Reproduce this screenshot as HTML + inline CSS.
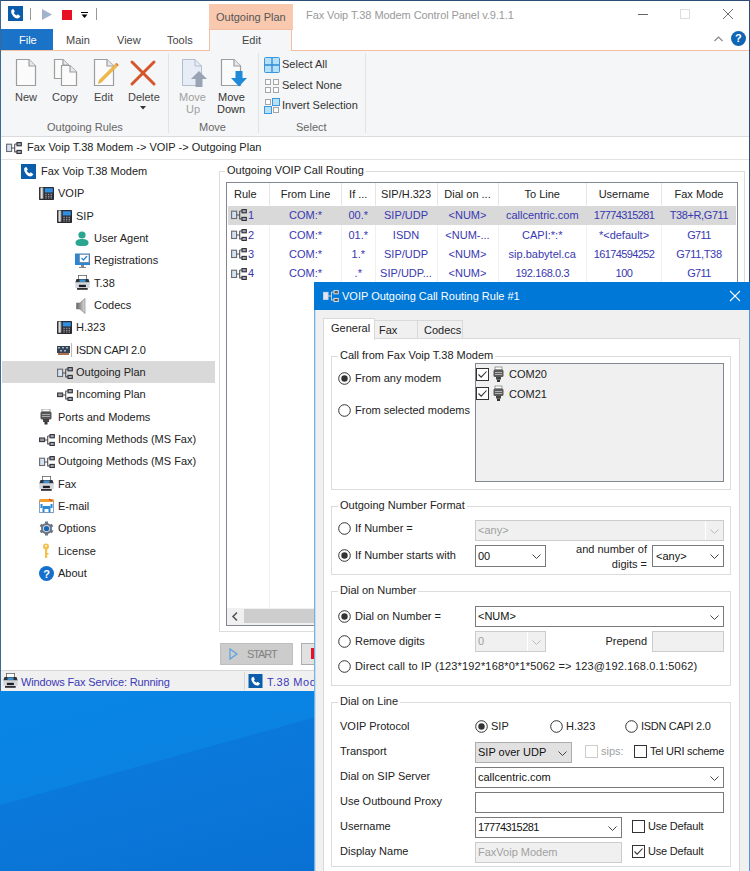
<!DOCTYPE html>
<html><head><meta charset="utf-8">
<style>
*{box-sizing:border-box;margin:0;padding:0}
html,body{width:750px;height:871px;overflow:hidden;background:#fff}
body{position:relative;font-family:"Liberation Sans",sans-serif;font-size:11px;color:#000}
.a{position:absolute}
.t{position:absolute;white-space:nowrap;line-height:13px}
svg{position:absolute;overflow:visible}
</style></head><body>

<svg width="0" height="0" style="position:absolute">
<defs>
<symbol id="phone" viewBox="0 0 15 15"><rect width="15" height="15" fill="#0b5cab"/><path d="M3.2 4.3 L5.1 2.7 L6.9 5.5 L5.7 6.7 Q6.5 8.5 8.5 9.5 L9.7 8.3 L12.4 10.2 L11 12.1 Q8 13.2 5.2 10.2 Q2.4 7.2 3.2 4.3 Z" fill="#fff"/></symbol>
<symbol id="desk" viewBox="0 0 15 13"><defs><linearGradient id="hg" x1="0" x2="1"><stop offset="0" stop-color="#555"/><stop offset="0.5" stop-color="#eee"/><stop offset="1" stop-color="#777"/></linearGradient></defs><rect x="0" y="0" width="15" height="13" rx="0.8" fill="#2a2a30"/><rect x="0.8" y="0.6" width="3.8" height="11.2" rx="0.8" fill="url(#hg)"/><rect x="5.8" y="1.2" width="8" height="4.3" fill="#2f90e2"/><g fill="#9a9aa2"><rect x="6.3" y="6.7" width="1.5" height="1.2"/><rect x="8.9" y="6.7" width="1.5" height="1.2"/><rect x="11.5" y="6.7" width="1.5" height="1.2"/><rect x="6.3" y="8.7" width="1.5" height="1.2"/><rect x="8.9" y="8.7" width="1.5" height="1.2"/><rect x="11.5" y="8.7" width="1.5" height="1.2"/><rect x="6.3" y="10.5" width="1.5" height="1"/><rect x="8.9" y="10.5" width="1.5" height="1"/><rect x="11.5" y="10.5" width="1.5" height="1"/></g></symbol>
<symbol id="route" viewBox="0 0 16 12"><rect x="0.6" y="2.2" width="5" height="7.3" fill="#d4e2f2" stroke="#6a6a70" stroke-width="1.1"/><path d="M5.6 6 H8.7 M8.7 1.9 V10.6 M8.7 2 H11 M8.7 9.9 H11" stroke="#505058" stroke-width="1.1" fill="none"/><rect x="11" y="0.6" width="4.3" height="3.2" fill="#a4aabb" stroke="#2e2e33" stroke-width="1.1"/><rect x="11" y="8.4" width="4.3" height="3.1" fill="#a4aabb" stroke="#2e2e33" stroke-width="1.1"/></symbol>
<symbol id="routein" viewBox="0 0 16 12"><rect x="0.6" y="4" width="5" height="3.6" fill="#9a9aa2" stroke="#38383e" stroke-width="1.1"/><path d="M5.6 6 H8.7 M8.7 1.9 V10.6 M8.7 2 H11 M8.7 9.9 H11" stroke="#505058" stroke-width="1.1" fill="none"/><rect x="11" y="0.6" width="4.3" height="3.2" fill="#a4aabb" stroke="#2e2e33" stroke-width="1.1"/><rect x="11" y="8.4" width="4.3" height="3.1" fill="#a4aabb" stroke="#2e2e33" stroke-width="1.1"/></symbol>
<symbol id="printer" viewBox="0 0 15 16"><rect x="3.4" y="0.4" width="8.2" height="4.2" fill="#fff" stroke="#666" stroke-width="0.8"/><path d="M1.5 4 H13.5 L14.7 7.6 H0.3 Z" fill="#2f3338"/><rect x="4.5" y="4.4" width="6" height="2.6" fill="#3f8fd0"/><rect x="0.3" y="7.5" width="14.4" height="5.4" fill="#d3d7de"/><rect x="3.9" y="9.8" width="7" height="2.3" fill="#1e1e22"/><rect x="2" y="13" width="10.7" height="1.8" fill="#2e2e33"/></symbol>
<symbol id="port" viewBox="0 0 12 16"><rect x="2" y="0" width="8" height="3" fill="#fff" stroke="#888" stroke-width="0.8"/><rect x="0.5" y="2.5" width="11" height="8" rx="1.5" fill="#555"/><rect x="2" y="5" width="8" height="1" fill="#aaa"/><rect x="2" y="7" width="8" height="1" fill="#aaa"/><rect x="3" y="10" width="6" height="3" fill="#444"/><rect x="4.5" y="13" width="3" height="2.5" fill="#333"/></symbol>
</defs></svg>

<!-- ===== MAIN WINDOW ===== -->
<div class="a" style="left:0;top:0;width:750px;height:691px;background:#fff;border-top:1px solid #2b4f77;border-left:1px solid #3c6894"></div>

<!-- title bar -->
<div class="a" style="left:209px;top:4px;width:84px;height:26px;background:#f9c9af"></div>
<div class="t" style="left:216px;top:11px;color:#555">Outgoing Plan</div>
<div class="t" style="left:306px;top:8.5px;color:#999;letter-spacing:-0.08px">Fax Voip T.38 Modem Control Panel v.9.1.1</div>

<!-- QAT -->
<svg style="left:8px;top:6px" width="15" height="15"><use href="#phone"/></svg>
<div class="a" style="left:30px;top:8px;width:1px;height:12px;background:#999"></div>
<svg style="left:42px;top:9px" width="11" height="12"><path d="M0 0 L10 5.5 L0 11 Z" fill="#a4b3cc"/></svg>
<div class="a" style="left:62px;top:10px;width:10px;height:10px;background:#e81123"></div>
<svg style="left:81px;top:12px" width="7" height="7"><rect x="0" y="0" width="7" height="1" fill="#000"/><path d="M0.5 2.5 L6.5 2.5 L3.5 6 Z" fill="#000"/></svg>
<div class="a" style="left:96px;top:8px;width:1px;height:12px;background:#999"></div>

<!-- window buttons -->
<div class="a" style="left:638px;top:14px;width:10px;height:1px;background:#666"></div>
<div class="a" style="left:680px;top:9px;width:10px;height:10px;border:1px solid #ddd"></div>
<svg style="left:723px;top:9px" width="10" height="10"><path d="M0 0 L10 10 M10 0 L0 10" stroke="#707070" stroke-width="1"/></svg>

<!-- tabs row -->
<div class="a" style="left:1px;top:29px;width:52px;height:21px;background:#1a73c6"></div>
<div class="t" style="left:19px;top:34px;color:#fff">File</div>
<div class="t" style="left:66px;top:34px;color:#444">Main</div>
<div class="t" style="left:117px;top:34px;color:#444">View</div>
<div class="t" style="left:167px;top:34px;color:#444">Tools</div>
<div class="a" style="left:209px;top:29px;width:83px;height:23px;background:#f5f6f7;border:1px solid #f3bfa2;border-bottom:none"></div>
<div class="t" style="left:242px;top:34px;color:#444">Edit</div>
<svg style="left:714px;top:36px" width="9" height="6"><path d="M0.5 5 L4.5 1 L8.5 5" stroke="#888" stroke-width="1.2" fill="none"/></svg>
<div class="a" style="left:731px;top:31px;width:15px;height:15px;border-radius:50%;background:#1065b5"></div>
<div class="t" style="left:735px;top:32px;color:#fff;font-weight:bold;font-size:11px">?</div>

<!-- ribbon body -->
<div class="a" style="left:1px;top:50px;width:749px;height:1px;background:#f3bfa2"></div>
<div class="a" style="left:210px;top:50px;width:81px;height:1px;background:#f5f6f7"></div>
<div class="a" style="left:1px;top:51px;width:749px;height:85px;background:#f5f6f7"></div>
<div class="a" style="left:1px;top:136px;width:749px;height:1px;background:#dadbdc"></div>


<!-- ribbon buttons -->
<svg style="left:16px;top:59px" width="20" height="27"><path d="M0.5 0.5 H13 L19.5 7 V26.5 H0.5 Z" fill="#fbfbfb" stroke="#9d9d9d" stroke-width="1.2"/><path d="M13 0.5 V7 H19.5" fill="#e8e8e8" stroke="#9d9d9d" stroke-width="1.2"/></svg>
<div class="t" style="left:15px;top:91px;color:#444">New</div>
<svg style="left:54px;top:59px" width="23" height="27"><path d="M0.5 0.5 H9 L14.5 6 V19.5 H0.5 Z" fill="#fbfbfb" stroke="#9d9d9d" stroke-width="1.2"/><path d="M9 0.5 V6 H14.5" fill="#e8e8e8" stroke="#9d9d9d" stroke-width="1.2"/><path d="M7.5 6.5 H16 L22.5 13 V26.5 H7.5 Z" fill="#fbfbfb" stroke="#9d9d9d" stroke-width="1.2"/><path d="M16 6.5 V13 H22.5" fill="#e8e8e8" stroke="#9d9d9d" stroke-width="1.2"/></svg>
<div class="t" style="left:52px;top:91px;color:#444">Copy</div>
<svg style="left:94px;top:59px" width="26" height="27"><path d="M0.5 0.5 H13 L19.5 7 V26.5 H0.5 Z" fill="#fbfbfb" stroke="#9d9d9d" stroke-width="1.2"/><path d="M13 0.5 V7 H19.5" fill="#e8e8e8" stroke="#9d9d9d" stroke-width="1.2"/><path d="M22.5 4 L24.5 6 L7.5 23 L4.5 24.5 L5.5 21 Z" fill="#efb845" stroke="#e0a030" stroke-width="0.6"/><path d="M22.5 4 L24.5 6 L23.5 7 L21.5 5 Z" fill="#e0785a"/></svg>
<div class="t" style="left:94px;top:91px;color:#444">Edit</div>
<svg style="left:130px;top:60px" width="26" height="26"><path d="M2 2 L24 24 M24 2 L2 24" stroke="#d6552a" stroke-width="3" stroke-linecap="round"/></svg>
<div class="t" style="left:128px;top:91px;color:#444">Delete</div>
<svg style="left:140px;top:106px" width="6" height="4"><path d="M0 0 H6 L3 3.5 Z" fill="#333"/></svg>
<div class="a" style="left:168px;top:53px;width:1px;height:80px;background:#e2e3e4"></div>
<div class="t" style="left:47px;top:121px;color:#666">Outgoing Rules</div>

<svg style="left:182px;top:59px" width="26" height="29"><path d="M0.5 0.5 H13 L19.5 7 V26.5 H0.5 Z" fill="#e6edf6" stroke="#b3bccb"/><path d="M13 0.5 V7 H19.5" fill="none" stroke="#b3bccb"/><path d="M17 12 L25 20 H20.5 V28 H13.5 V20 H9 Z" fill="#9aa3b4"/></svg>
<div class="t" style="left:179px;top:91px;color:#a0a0a0">Move</div>
<div class="t" style="left:186px;top:103px;color:#a0a0a0">Up</div>
<svg style="left:221px;top:59px" width="27" height="29"><path d="M0.5 0.5 H13 L19.5 7 V26.5 H0.5 Z" fill="#fbfbfb" stroke="#9d9d9d" stroke-width="1.2"/><path d="M13 0.5 V7 H19.5" fill="#e8e8e8" stroke="#9d9d9d" stroke-width="1.2"/><path d="M14.5 12 H21.5 V19 H26 L18 27.5 L10 19 H14.5 Z" fill="#1e8ad8"/></svg>
<div class="t" style="left:218px;top:91px;color:#333">Move</div>
<div class="t" style="left:217px;top:103px;color:#333">Down</div>
<div class="t" style="left:199px;top:121px;color:#666">Move</div>
<div class="a" style="left:258px;top:53px;width:1px;height:80px;background:#e2e3e4"></div>

<svg style="left:264px;top:57px" width="16" height="16"><rect x="0.5" y="0.5" width="15" height="15" rx="1" fill="#b5e0f7" stroke="#3d97dc"/><path d="M8 1 V15 M1 8 H15" stroke="#2f8ad6" stroke-width="1.3"/></svg>
<div class="t" style="left:282px;top:58px;color:#333">Select All</div>
<svg style="left:265px;top:79px" width="14" height="14"><g fill="#fbfbfb" stroke="#a6a6a6"><rect x="0.5" y="0.5" width="5" height="5"/><rect x="8.5" y="0.5" width="5" height="5"/><rect x="0.5" y="8.5" width="5" height="5"/><rect x="8.5" y="8.5" width="5" height="5"/></g></svg>
<div class="t" style="left:282px;top:79px;color:#333">Select None</div>
<svg style="left:264px;top:98px" width="16" height="16"><g fill="#fbfbfb" stroke="#a6a6a6"><rect x="1.5" y="1.5" width="5" height="5"/><rect x="9.5" y="9.5" width="5" height="5"/></g><g fill="#b5e0f7" stroke="#3d97dc"><rect x="8.5" y="0.5" width="7" height="7"/><rect x="0.5" y="8.5" width="7" height="7"/></g></svg>
<div class="t" style="left:282px;top:99px;color:#333">Invert Selection</div>
<div class="t" style="left:296px;top:121px;color:#666">Select</div>
<div class="a" style="left:365px;top:53px;width:1px;height:80px;background:#e2e3e4"></div>

<!-- breadcrumb -->
<div class="a" style="left:1px;top:159px;width:749px;height:1px;background:#e3e3e3"></div>
<svg style="left:6px;top:142px" width="16" height="12"><use href="#route"/></svg>
<div class="t" style="left:27px;top:141px;color:#222">Fax Voip T.38 Modem -&gt; VOIP -&gt; Outgoing Plan</div>

<!-- tree highlight -->
<div class="a" style="left:2px;top:361px;width:213px;height:22px;background:#d9d9d9"></div>

<!-- tree -->
<div class="t" style="left:41px;top:165.0px;color:#222">Fax Voip T.38 Modem</div>
<svg style="left:21px;top:164.0px" width="15" height="15"><use href="#phone"/></svg>
<div class="t" style="left:58px;top:187.3px;color:#222">VOIP</div>
<svg style="left:39px;top:187.3px" width="15" height="13"><use href="#desk"/></svg>
<div class="t" style="left:76px;top:209.7px;color:#222">SIP</div>
<svg style="left:57px;top:209.7px" width="15" height="13"><use href="#desk"/></svg>
<div class="t" style="left:94px;top:232.0px;color:#222">User Agent</div>
<svg style="left:75px;top:230.5px" width="15" height="16"><circle cx="7" cy="4" r="3.6" fill="#2aa58f"/><path d="M0.5 12 C0.5 9 3 8 7 8 C11 8 13.5 9 13.5 12 C13.5 14.6 11 15 7 15 C3 15 0.5 14.6 0.5 12 Z" fill="#2aa58f"/></svg>
<div class="t" style="left:94px;top:254.3px;color:#222">Registrations</div>
<svg style="left:75px;top:252.8px" width="15" height="16"><rect x="0" y="0.5" width="15" height="11.5" fill="#2b86d6"/><rect x="4.5" y="1.3" width="9.5" height="8" fill="#fff" stroke="#777" stroke-width="0.6"/><path d="M6.5 5 L8.5 7 L12 3" stroke="#2b86d6" stroke-width="1.3" fill="none"/><rect x="6" y="12" width="3" height="2" fill="#888"/><rect x="4" y="14" width="7" height="1" fill="#888"/></svg>
<div class="t" style="left:94px;top:276.6px;color:#222">T.38</div>
<svg style="left:75px;top:275.1px" width="15" height="16"><use href="#printer"/></svg>
<div class="t" style="left:94px;top:299.0px;color:#222">Codecs</div>
<svg style="left:76px;top:297.5px" width="10" height="16"><defs><linearGradient id="sg" x1="0" x2="1"><stop offset="0" stop-color="#666"/><stop offset="1" stop-color="#ddd"/></linearGradient></defs><path d="M0.5 5 H4 L9 0.5 V15.5 L4 11 H0.5 Z" fill="url(#sg)" stroke="#777" stroke-width="0.6"/></svg>
<div class="t" style="left:76px;top:321.3px;color:#222">H.323</div>
<svg style="left:57px;top:321.3px" width="15" height="13"><use href="#desk"/></svg>
<div class="t" style="left:76px;top:343.6px;color:#222"><span style="letter-spacing:-0.3px">ISDN CAPI 2.0</span></div>
<svg style="left:57px;top:343.1px" width="16" height="14"><rect x="0" y="3" width="13" height="7" fill="#3a4250"/><g fill="#8fb7d8"><rect x="1" y="4" width="2" height="1.5"/><rect x="5" y="4" width="2" height="1.5"/><rect x="9" y="4" width="2" height="1.5"/><rect x="3" y="7" width="2" height="1.5"/><rect x="7" y="7" width="2" height="1.5"/></g><rect x="1" y="10" width="11" height="2" fill="#b0704a"/><path d="M14.5 0 V14" stroke="#bbb" stroke-width="1"/></svg>
<div class="t" style="left:76px;top:366.0px;color:#222">Outgoing Plan</div>
<svg style="left:56.5px;top:367.0px" width="16" height="12"><use href="#route"/></svg>
<div class="t" style="left:76px;top:388.3px;color:#222">Incoming Plan</div>
<svg style="left:56.5px;top:389.3px" width="16" height="12"><use href="#routein"/></svg>
<div class="t" style="left:58px;top:410.6px;color:#222">Ports and Modems</div>
<svg style="left:40px;top:409.1px" width="12" height="16"><use href="#port"/></svg>
<div class="t" style="left:58px;top:433.0px;color:#222">Incoming Methods (MS Fax)</div>
<svg style="left:38.5px;top:434.0px" width="16" height="12"><use href="#routein"/></svg>
<div class="t" style="left:58px;top:455.3px;color:#222">Outgoing Methods (MS Fax)</div>
<svg style="left:38.5px;top:456.3px" width="16" height="12"><use href="#route"/></svg>
<div class="t" style="left:58px;top:477.6px;color:#222">Fax</div>
<svg style="left:39px;top:476.1px" width="15" height="16"><use href="#printer"/></svg>
<div class="t" style="left:58px;top:499.9px;color:#222">E-mail</div>
<svg style="left:39px;top:498.4px" width="15" height="16"><rect x="0.5" y="2.5" width="14" height="12" fill="#fff" stroke="#8aa0b8"/><rect x="0.5" y="1" width="14" height="3" fill="#f0a030"/><path d="M10 1 L13 3" stroke="#e04020" stroke-width="1.2"/><path d="M3.5 8 H11.5 V14.5 H9.5 V11 H5.5 V14.5 H3.5 Z" fill="#2a8ad6"/><rect x="1.5" y="6" width="2" height="4" fill="#2a8ad6"/><rect x="11.5" y="6" width="2" height="4" fill="#2a8ad6"/></svg>
<div class="t" style="left:58px;top:522.3px;color:#222">Options</div>
<svg style="left:39px;top:521.3px" width="15" height="15"><circle cx="7.5" cy="7.5" r="5.5" fill="#6b7584"/><g stroke="#6b7584" stroke-width="3"><path d="M7.5 0.5 V14.5"/><path d="M1.4 4 L13.6 11"/><path d="M1.4 11 L13.6 4"/></g><circle cx="7.5" cy="7.5" r="3.6" fill="#cfd6e0"/><circle cx="7.5" cy="7.5" r="2.6" fill="#1565b8"/></svg>
<div class="t" style="left:58px;top:544.6px;color:#222">License</div>
<svg style="left:42px;top:543.1px" width="8" height="16"><circle cx="4" cy="3.6" r="3" fill="#f5c04a"/><rect x="3" y="5" width="2.2" height="10" fill="#f5c04a"/><rect x="5" y="10" width="1.5" height="1.5" fill="#f5c04a"/><circle cx="4" cy="3" r="0.9" fill="#fff"/></svg>
<div class="t" style="left:58px;top:566.9px;color:#222">About</div>
<svg style="left:39px;top:565.9px" width="15" height="15"><circle cx="7.5" cy="7.5" r="7.5" fill="#1470cc"/><text x="7.5" y="11.5" text-anchor="middle" font-family="Liberation Sans" font-weight="bold" font-size="11" fill="#fff">?</text></svg>

<!-- list group -->
<div class="a" style="left:219px;top:171px;width:526px;height:461px;border:1px solid #dcdcdc;border-radius:0"></div>

<div class="t" style="left:225px;top:164px;color:#222;background:#fff;padding:0 2px">Outgoing VOIP Call Routing</div>
<div class="a" style="left:226px;top:182px;width:512px;height:444px;border:1px solid #828790;background:#fff"></div>
<div class="a" style="left:269px;top:183px;width:1px;height:22px;background:#e5e5e5"></div>
<div class="a" style="left:269px;top:205px;width:1px;height:403px;background:#f0f0f0"></div>
<div class="a" style="left:341px;top:183px;width:1px;height:22px;background:#e5e5e5"></div>
<div class="a" style="left:341px;top:205px;width:1px;height:403px;background:#f0f0f0"></div>
<div class="a" style="left:375px;top:183px;width:1px;height:22px;background:#e5e5e5"></div>
<div class="a" style="left:375px;top:205px;width:1px;height:403px;background:#f0f0f0"></div>
<div class="a" style="left:437px;top:183px;width:1px;height:22px;background:#e5e5e5"></div>
<div class="a" style="left:437px;top:205px;width:1px;height:403px;background:#f0f0f0"></div>
<div class="a" style="left:498px;top:183px;width:1px;height:22px;background:#e5e5e5"></div>
<div class="a" style="left:498px;top:205px;width:1px;height:403px;background:#f0f0f0"></div>
<div class="a" style="left:586px;top:183px;width:1px;height:22px;background:#e5e5e5"></div>
<div class="a" style="left:586px;top:205px;width:1px;height:403px;background:#f0f0f0"></div>
<div class="a" style="left:661px;top:183px;width:1px;height:22px;background:#e5e5e5"></div>
<div class="a" style="left:661px;top:205px;width:1px;height:403px;background:#f0f0f0"></div>
<div class="t" style="left:234px;top:188px;color:#222">Rule</div>
<div class="t" style="left:269.5px;top:188px;width:72.0px;text-align:center;color:#222">From Line</div>
<div class="t" style="left:341.5px;top:188px;width:33.5px;text-align:center;color:#222">If ...</div>
<div class="t" style="left:375.0px;top:188px;width:62.0px;text-align:center;color:#222">SIP/H.323</div>
<div class="t" style="left:437.0px;top:188px;width:61.0px;text-align:center;color:#222">Dial on ...</div>
<div class="t" style="left:498.0px;top:188px;width:88.5px;text-align:center;color:#222">To Line</div>
<div class="t" style="left:586.5px;top:188px;width:75.0px;text-align:center;color:#222">Username</div>
<div class="t" style="left:661.5px;top:188px;width:75.0px;text-align:center;color:#222">Fax Mode</div>
<div class="a" style="left:228px;top:206px;width:508px;height:19px;background:#d9d9d9"></div>
<svg style="left:231px;top:209.0px" width="16" height="12"><use href="#route"/></svg>
<div class="t" style="left:248px;top:209.4px;color:#3838b0">1</div>
<div class="t" style="left:269.5px;top:209.4px;width:72.0px;text-align:center;color:#3838b0">COM:*</div>
<div class="t" style="left:341.5px;top:209.4px;width:33.5px;text-align:center;color:#3838b0">00.*</div>
<div class="t" style="left:375.0px;top:209.4px;width:62.0px;text-align:center;color:#3838b0">SIP/UDP</div>
<div class="t" style="left:437.0px;top:209.4px;width:61.0px;text-align:center;color:#3838b0">&lt;NUM&gt;</div>
<div class="t" style="left:498.0px;top:209.4px;width:88.5px;text-align:center;color:#3838b0">callcentric.com</div>
<div class="t" style="left:586.5px;top:209.4px;width:75.0px;text-align:center;color:#3838b0"><span style="letter-spacing:-0.6px">17774315281</span></div>
<div class="t" style="left:661.5px;top:209.4px;width:75.0px;text-align:center;color:#3838b0"><span style="letter-spacing:-0.4px">T38+R,G711</span></div>
<svg style="left:231px;top:228.7px" width="16" height="12"><use href="#route"/></svg>
<div class="t" style="left:248px;top:228.6px;color:#3838b0">2</div>
<div class="t" style="left:269.5px;top:228.6px;width:72.0px;text-align:center;color:#3838b0">COM:*</div>
<div class="t" style="left:341.5px;top:228.6px;width:33.5px;text-align:center;color:#3838b0">01.*</div>
<div class="t" style="left:375.0px;top:228.6px;width:62.0px;text-align:center;color:#3838b0">ISDN</div>
<div class="t" style="left:437.0px;top:228.6px;width:61.0px;text-align:center;color:#3838b0">&lt;NUM-...</div>
<div class="t" style="left:498.0px;top:228.6px;width:88.5px;text-align:center;color:#3838b0">CAPI:*:*</div>
<div class="t" style="left:586.5px;top:228.6px;width:75.0px;text-align:center;color:#3838b0">*&lt;default&gt;</div>
<div class="t" style="left:661.5px;top:228.6px;width:75.0px;text-align:center;color:#3838b0"><span style="letter-spacing:-0.6px">G711</span></div>
<svg style="left:231px;top:248.3px" width="16" height="12"><use href="#route"/></svg>
<div class="t" style="left:248px;top:247.8px;color:#3838b0">3</div>
<div class="t" style="left:269.5px;top:247.8px;width:72.0px;text-align:center;color:#3838b0">COM:*</div>
<div class="t" style="left:341.5px;top:247.8px;width:33.5px;text-align:center;color:#3838b0">1.*</div>
<div class="t" style="left:375.0px;top:247.8px;width:62.0px;text-align:center;color:#3838b0">SIP/UDP</div>
<div class="t" style="left:437.0px;top:247.8px;width:61.0px;text-align:center;color:#3838b0">&lt;NUM&gt;</div>
<div class="t" style="left:498.0px;top:247.8px;width:88.5px;text-align:center;color:#3838b0">sip.babytel.ca</div>
<div class="t" style="left:586.5px;top:247.8px;width:75.0px;text-align:center;color:#3838b0"><span style="letter-spacing:-0.6px">16174594252</span></div>
<div class="t" style="left:661.5px;top:247.8px;width:75.0px;text-align:center;color:#3838b0"><span style="letter-spacing:-0.35px">G711,T38</span></div>
<svg style="left:231px;top:267.9px" width="16" height="12"><use href="#route"/></svg>
<div class="t" style="left:248px;top:267.0px;color:#3838b0">4</div>
<div class="t" style="left:269.5px;top:267.0px;width:72.0px;text-align:center;color:#3838b0">COM:*</div>
<div class="t" style="left:341.5px;top:267.0px;width:33.5px;text-align:center;color:#3838b0">.*</div>
<div class="t" style="left:375.0px;top:267.0px;width:62.0px;text-align:center;color:#3838b0">SIP/UDP...</div>
<div class="t" style="left:437.0px;top:267.0px;width:61.0px;text-align:center;color:#3838b0">&lt;NUM&gt;</div>
<div class="t" style="left:498.0px;top:267.0px;width:88.5px;text-align:center;color:#3838b0"><span style="letter-spacing:-0.4px">192.168.0.3</span></div>
<div class="t" style="left:586.5px;top:267.0px;width:75.0px;text-align:center;color:#3838b0"><span style="letter-spacing:-0.5px">100</span></div>
<div class="t" style="left:661.5px;top:267.0px;width:75.0px;text-align:center;color:#3838b0"><span style="letter-spacing:-0.6px">G711</span></div>
<div class="a" style="left:227px;top:608px;width:510px;height:17px;background:#f0f0f0"></div>
<div class="a" style="left:244px;top:609px;width:493px;height:14px;background:#cdcdcd"></div>
<svg style="left:232px;top:612px" width="6" height="9"><path d="M5 0.5 L1 4.5 L5 8.5" stroke="#555" stroke-width="1.6" fill="none"/></svg>
<div class="a" style="left:220px;top:643px;width:73px;height:22px;background:#cccccc;border:1px solid #bfbfbf"></div>
<svg style="left:229px;top:648px" width="9" height="12"><path d="M1 1 L8 6 L1 11 Z" fill="none" stroke="#5aa0e0" stroke-width="1.2"/></svg>
<div class="t" style="left:247px;top:648px;color:#838383;letter-spacing:-1.1px">START</div>
<div class="a" style="left:301px;top:643px;width:73px;height:22px;background:#e1e1e1;border:1px solid #adadad"></div>
<div class="a" style="left:311px;top:648px;width:10px;height:11px;background:#e81123"></div>
<!-- status bar -->
<div class="a" style="left:1px;top:670px;width:749px;height:1px;background:#d7d7d7"></div>
<div class="a" style="left:1px;top:671px;width:749px;height:20px;background:#f0f0f0"></div>
<svg style="left:3px;top:673px" width="15" height="16"><use href="#printer"/></svg>
<div class="t" style="left:21px;top:675.7px;color:#3a38b8;letter-spacing:-0.15px">Windows Fax Service: Running</div>
<div class="a" style="left:244px;top:672px;width:1px;height:18px;background:#d7d7d7"></div>
<svg style="left:248px;top:674px" width="15" height="14"><use href="#phone"/></svg>
<div class="t" style="left:267px;top:675.7px;color:#3a38b8;letter-spacing:0.5px">T.38 Modem</div>

<div class="a" style="left:749px;top:0;width:1px;height:691px;background:#2b4f77"></div>
<!-- desktop -->
<div class="a" style="left:0;top:691px;width:750px;height:180px;background:linear-gradient(165deg,#0a7edf 0%,#0a76d8 45%,#086acd 100%)"></div>
<div class="a" style="left:0;top:691px;width:330px;height:130px;background:linear-gradient(165deg,#0886e6 0%,#0a82e2 60%,#0c86e6 100%);clip-path:polygon(0 0,330px 0,330px 22px,0 114px)"></div>

<!-- ===== DIALOG ===== -->
<div class="a" style="left:314px;top:282px;width:436px;height:600px;background:#f0f0f0;border-left:1px solid #7cb0da;border-right:1px solid #4a9ce0"></div><div class="a" style="left:315px;top:310px;width:1px;height:561px;background:#c4def2"></div>
<div class="a" style="left:314px;top:282px;width:436px;height:28px;background:#0078d7"></div>
<div class="t" style="left:342px;top:290px;color:#fff">VOIP Outgoing Call Routing Rule #1</div>
<svg style="left:730px;top:291px" width="10" height="10"><path d="M0 0 L10 10 M10 0 L0 10" stroke="#fff" stroke-width="1.1"/></svg>

<!-- dialog content -->
<svg style="left:323px;top:290px" width="16" height="12"><rect x="0.6" y="2.4" width="4.4" height="7" fill="#e6e6f0" stroke="#cfd6e6" stroke-width="1"/><path d="M5 6 H8.5 M8.5 2 V10.5 M8.5 2 H11 M8.5 9.9 H11" stroke="#c8d0dc" stroke-width="1" fill="none"/><rect x="11" y="0.6" width="4.3" height="3.2" fill="#555" stroke="#ddd" stroke-width="1"/><rect x="11" y="8.4" width="4.3" height="3.1" fill="#555" stroke="#ddd" stroke-width="1"/></svg>
<div class="a" style="left:323px;top:338px;width:417px;height:540px;background:#fff;border:1px solid #d9d9d9"></div>
<div class="a" style="left:374px;top:320px;width:44px;height:19px;background:#f0f0f0;border:1px solid #d9d9d9"></div>
<div class="a" style="left:417px;top:320px;width:46px;height:19px;background:#f0f0f0;border:1px solid #d9d9d9"></div>
<div class="a" style="left:323px;top:318px;width:52px;height:22px;background:#fff;border:1px solid #d9d9d9;border-bottom:none"></div>
<div class="t" style="left:331px;top:322px;color:#222">General</div>
<div class="t" style="left:379px;top:324px;color:#222">Fax</div>
<div class="t" style="left:424px;top:324px;color:#222">Codecs</div>
<div class="a" style="left:331px;top:356px;width:400px;height:134px;border:1px solid #dcdcdc"></div>

<div class="t" style="left:338px;top:349.3px;color:#222;background:#fff;padding:0 2px">Call from Fax Voip T.38 Modem</div>
<div class="a" style="left:331px;top:506px;width:400px;height:69px;border:1px solid #dcdcdc"></div>

<div class="t" style="left:338px;top:499.3px;color:#222;background:#fff;padding:0 2px">Outgoing Number Format</div>
<div class="a" style="left:331px;top:591px;width:400px;height:95px;border:1px solid #dcdcdc"></div>

<div class="t" style="left:338px;top:584.3px;color:#222;background:#fff;padding:0 2px">Dial on Number</div>
<div class="a" style="left:331px;top:702px;width:400px;height:165px;border:1px solid #dcdcdc"></div>

<div class="t" style="left:338px;top:695.3px;color:#222;background:#fff;padding:0 2px">Dial on Line</div>
<svg style="left:338px;top:372px" width="13" height="13"><circle cx="6.5" cy="6.5" r="5.8" fill="#fff" stroke="#333"/><circle cx="6.5" cy="6.5" r="3.2" fill="#333"/></svg>
<div class="t" style="left:355px;top:371.5px;color:#222">From any modem</div>
<svg style="left:338px;top:404px" width="13" height="13"><circle cx="6.5" cy="6.5" r="5.8" fill="#fff" stroke="#333"/></svg>
<div class="t" style="left:355px;top:403.5px;color:#222">From selected modems</div>
<div class="a" style="left:475px;top:363px;width:249px;height:119px;background:#f0f0f0;border:1px solid #828790"></div>
<svg style="left:476px;top:367.5px" width="13" height="13"><rect x="0.5" y="0.5" width="12" height="12" fill="#fff" stroke="#333"/><path d="M2.5 6.5 L5.2 9.2 L10.5 3.5" stroke="#333" stroke-width="1.1" fill="none"/></svg>
<svg style="left:493px;top:366.5px" width="11" height="15"><rect x="2" y="0" width="7" height="3" fill="#fff" stroke="#777" stroke-width="0.7"/><rect x="0.5" y="2.5" width="10" height="7.5" rx="1.5" fill="#5a5a5a"/><rect x="2" y="5" width="7" height="0.9" fill="#bbb"/><rect x="2" y="7" width="7" height="0.9" fill="#bbb"/><rect x="3" y="10" width="5" height="2.5" fill="#444"/><rect x="4" y="12.5" width="3" height="2.5" fill="#333"/></svg>
<div class="t" style="left:509px;top:368.0px;color:#222">COM20</div>
<svg style="left:476px;top:387.0px" width="13" height="13"><rect x="0.5" y="0.5" width="12" height="12" fill="#fff" stroke="#333"/><path d="M2.5 6.5 L5.2 9.2 L10.5 3.5" stroke="#333" stroke-width="1.1" fill="none"/></svg>
<svg style="left:493px;top:386.0px" width="11" height="15"><rect x="2" y="0" width="7" height="3" fill="#fff" stroke="#777" stroke-width="0.7"/><rect x="0.5" y="2.5" width="10" height="7.5" rx="1.5" fill="#5a5a5a"/><rect x="2" y="5" width="7" height="0.9" fill="#bbb"/><rect x="2" y="7" width="7" height="0.9" fill="#bbb"/><rect x="3" y="10" width="5" height="2.5" fill="#444"/><rect x="4" y="12.5" width="3" height="2.5" fill="#333"/></svg>
<div class="t" style="left:509px;top:387.5px;color:#222">COM21</div>
<svg style="left:338px;top:522px" width="13" height="13"><circle cx="6.5" cy="6.5" r="5.8" fill="#fff" stroke="#333"/></svg>
<div class="t" style="left:355px;top:521.5px;color:#222">If Number =</div>
<svg style="left:338px;top:549px" width="13" height="13"><circle cx="6.5" cy="6.5" r="5.8" fill="#fff" stroke="#333"/><circle cx="6.5" cy="6.5" r="3.2" fill="#333"/></svg>
<div class="t" style="left:355px;top:548.5px;color:#222">If Number starts with</div>
<div class="a" style="left:475px;top:520px;width:249px;height:21px;background:#f0f0f0;border:1px solid #cccccc"></div>
<div class="a" style="left:705px;top:521px;width:1px;height:19px;background:#fff"></div>
<div class="t" style="left:478px;top:524.0px;color:#a0a0a0">&lt;any&gt;</div>
<svg style="left:710px;top:528.5px" width="9" height="5"><path d="M0.5 0.5 L4.5 4.5 L8.5 0.5" stroke="#bbb" stroke-width="1" fill="none"/></svg>
<div class="a" style="left:475px;top:545px;width:71px;height:22px;background:#fff;border:1px solid #7a7a7a"></div>
<div class="t" style="left:478px;top:549.5px;color:#111">00</div>
<svg style="left:532px;top:554.0px" width="9" height="5"><path d="M0.5 0.5 L4.5 4.5 L8.5 0.5" stroke="#444" stroke-width="1" fill="none"/></svg>
<div class="t" style="left:560px;top:543px;width:87px;text-align:right;color:#222">and number of</div>
<div class="t" style="left:560px;top:558px;width:87px;text-align:right;color:#222">digits =</div>
<div class="a" style="left:652px;top:545px;width:72px;height:22px;background:#fff;border:1px solid #7a7a7a"></div>
<div class="t" style="left:656px;top:549.5px;color:#111">&lt;any&gt;</div>
<svg style="left:710px;top:554.0px" width="9" height="5"><path d="M0.5 0.5 L4.5 4.5 L8.5 0.5" stroke="#444" stroke-width="1" fill="none"/></svg>
<svg style="left:338px;top:610px" width="13" height="13"><circle cx="6.5" cy="6.5" r="5.8" fill="#fff" stroke="#333"/><circle cx="6.5" cy="6.5" r="3.2" fill="#333"/></svg>
<div class="t" style="left:355px;top:609.5px;color:#222">Dial on Number =</div>
<div class="a" style="left:475px;top:606px;width:249px;height:21px;background:#fff;border:1px solid #7a7a7a"></div>
<div class="t" style="left:478px;top:610.0px;color:#111">&lt;NUM&gt;</div>
<svg style="left:710px;top:614.5px" width="9" height="5"><path d="M0.5 0.5 L4.5 4.5 L8.5 0.5" stroke="#444" stroke-width="1" fill="none"/></svg>
<svg style="left:338px;top:635px" width="13" height="13"><circle cx="6.5" cy="6.5" r="5.8" fill="#fff" stroke="#333"/></svg>
<div class="t" style="left:355px;top:634.5px;color:#222">Remove digits</div>
<div class="a" style="left:475px;top:631px;width:71px;height:21px;background:#f0f0f0;border:1px solid #cccccc"></div>
<div class="a" style="left:527px;top:632px;width:1px;height:19px;background:#fff"></div>
<div class="t" style="left:478px;top:635.0px;color:#a0a0a0">0</div>
<svg style="left:532px;top:639.5px" width="9" height="5"><path d="M0.5 0.5 L4.5 4.5 L8.5 0.5" stroke="#bbb" stroke-width="1" fill="none"/></svg>
<div class="t" style="left:560px;top:635px;width:87px;text-align:right;color:#222">Prepend</div>
<div class="a" style="left:652px;top:631px;width:72px;height:21px;background:#f0f0f0;border:1px solid #cccccc"></div>
<svg style="left:338px;top:660px" width="13" height="13"><circle cx="6.5" cy="6.5" r="5.8" fill="#fff" stroke="#333"/></svg>
<div class="t" style="left:355px;top:659.5px;color:#222"><span style="letter-spacing:0.17px">Direct call to IP (123*192*168*0*1*5062 =&gt; 123@192.168.0.1:5062)</span></div>
<div class="t" style="left:340px;top:720px;color:#222">VOIP Protocol</div>
<svg style="left:475px;top:720px" width="13" height="13"><circle cx="6.5" cy="6.5" r="5.8" fill="#fff" stroke="#333"/><circle cx="6.5" cy="6.5" r="3.2" fill="#333"/></svg>
<div class="t" style="left:491px;top:719.5px;color:#222">SIP</div>
<svg style="left:550px;top:720px" width="13" height="13"><circle cx="6.5" cy="6.5" r="5.8" fill="#fff" stroke="#333"/></svg>
<div class="t" style="left:566px;top:719.5px;color:#222">H.323</div>
<svg style="left:625px;top:720px" width="13" height="13"><circle cx="6.5" cy="6.5" r="5.8" fill="#fff" stroke="#333"/></svg>
<div class="t" style="left:641px;top:719.5px;color:#222"><span style="letter-spacing:-0.3px">ISDN CAPI 2.0</span></div>
<div class="t" style="left:340px;top:745px;color:#222">Transport</div>
<div class="a" style="left:475px;top:742px;width:97px;height:21px;background:#e1e1e1;border:1px solid #adadad"></div>
<div class="t" style="left:478px;top:746.0px;color:#111">SIP over UDP</div>
<svg style="left:558px;top:750.5px" width="9" height="5"><path d="M0.5 0.5 L4.5 4.5 L8.5 0.5" stroke="#444" stroke-width="1" fill="none"/></svg>
<svg style="left:585px;top:745px" width="13" height="13"><rect x="0.5" y="0.5" width="12" height="12" fill="#fff" stroke="#cccccc"/></svg>
<div class="t" style="left:601px;top:744.5px;color:#a0a0a0">sips:</div>
<svg style="left:634px;top:745px" width="13" height="13"><rect x="0.5" y="0.5" width="12" height="12" fill="#fff" stroke="#333"/></svg>
<div class="t" style="left:650px;top:744.5px;color:#222"><span style="letter-spacing:-0.25px">Tel URI scheme</span></div>
<div class="t" style="left:340px;top:770px;color:#222">Dial on SIP Server</div>
<div class="a" style="left:475px;top:767px;width:249px;height:21px;background:#fff;border:1px solid #7a7a7a"></div>
<div class="t" style="left:478px;top:771.0px;color:#111">callcentric.com</div>
<svg style="left:710px;top:775.5px" width="9" height="5"><path d="M0.5 0.5 L4.5 4.5 L8.5 0.5" stroke="#444" stroke-width="1" fill="none"/></svg>
<div class="t" style="left:340px;top:795px;color:#222">Use Outbound Proxy</div>
<div class="a" style="left:475px;top:792px;width:249px;height:21px;background:#fff;border:1px solid #7a7a7a"></div>
<div class="t" style="left:340px;top:820px;color:#222">Username</div>
<div class="a" style="left:475px;top:817px;width:147px;height:21px;background:#fff;border:1px solid #7a7a7a"></div>
<div class="t" style="left:478px;top:821.0px;color:#111"><span style="letter-spacing:-0.6px">17774315281</span></div>
<svg style="left:608px;top:825.5px" width="9" height="5"><path d="M0.5 0.5 L4.5 4.5 L8.5 0.5" stroke="#444" stroke-width="1" fill="none"/></svg>
<svg style="left:632px;top:820px" width="13" height="13"><rect x="0.5" y="0.5" width="12" height="12" fill="#fff" stroke="#333"/></svg>
<div class="t" style="left:648px;top:819.5px;color:#222"><span style="letter-spacing:-0.2px">Use Default</span></div>
<div class="t" style="left:340px;top:845px;color:#222">Display Name</div>
<div class="a" style="left:475px;top:842px;width:147px;height:21px;background:#f0f0f0;border:1px solid #cccccc"></div>
<div class="t" style="left:478px;top:846.0px;color:#a0a0a0">FaxVoip Modem</div>
<svg style="left:632px;top:845px" width="13" height="13"><rect x="0.5" y="0.5" width="12" height="12" fill="#fff" stroke="#333"/><path d="M2.5 6.5 L5.2 9.2 L10.5 3.5" stroke="#333" stroke-width="1.1" fill="none"/></svg>
<div class="t" style="left:648px;top:844.5px;color:#222"><span style="letter-spacing:-0.2px">Use Default</span></div>
</body></html>
